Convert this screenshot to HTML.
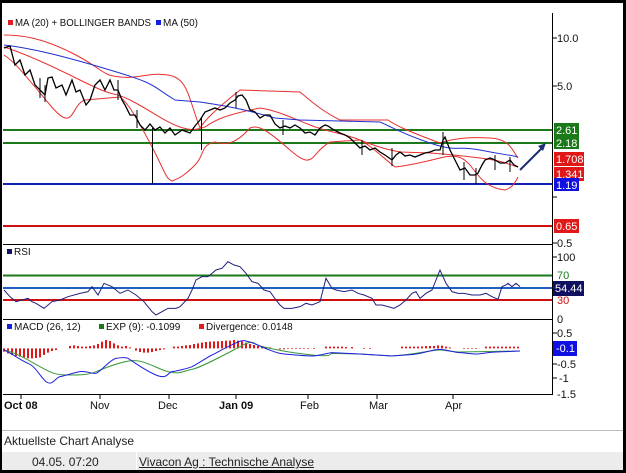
<!DOCTYPE html>
<html><head><meta charset="utf-8"><style>
html,body{margin:0;padding:0;background:#000;}
#w{position:relative;width:626px;height:473px;overflow:hidden;background:#000;}
#in{position:absolute;left:2px;top:3px;width:621px;height:467px;background:#fff;}
svg{position:absolute;left:0;top:0;}
text{font-family:"Liberation Sans",sans-serif;}
.ft{position:absolute;font-family:"Liberation Sans",sans-serif;font-size:12px;color:#222;}
</style></head><body><div id="w"><div id="in"></div>
<svg width="626" height="473" viewBox="0 0 626 473">
<g font-size="11">
<line x1="552.5" y1="13" x2="552.5" y2="395" stroke="#000"/>
<g stroke="#000"><line x1="552" y1="38" x2="557" y2="38"/><line x1="552" y1="86" x2="557" y2="86"/><line x1="552" y1="197" x2="557" y2="197"/><line x1="552" y1="243" x2="557" y2="243"/><line x1="552" y1="257" x2="557" y2="257"/><line x1="552" y1="333" x2="557" y2="333"/><line x1="552" y1="364" x2="557" y2="364"/><line x1="552" y1="378" x2="557" y2="378"/>
<line x1="21" y1="394" x2="21" y2="399"/><line x1="100" y1="394" x2="100" y2="399"/><line x1="169" y1="394" x2="169" y2="399"/><line x1="236" y1="394" x2="236" y2="399"/><line x1="308" y1="394" x2="308" y2="399"/><line x1="377" y1="394" x2="377" y2="399"/><line x1="453" y1="394" x2="453" y2="399"/></g>
<line x1="3" y1="244.5" x2="552" y2="244.5" stroke="#000"/>
<line x1="3" y1="319.5" x2="552" y2="319.5" stroke="#000"/>
<line x1="3" y1="394.5" x2="552" y2="394.5" stroke="#000"/>
<g fill="#111"><text x="557" y="42">10.0</text><text x="557" y="90">5.0</text><text x="557" y="247">0.5</text><text x="557" y="261">100</text><text x="557" y="323">0</text><text x="557" y="337">0.5</text><text x="557" y="368">-0.5</text><text x="559" y="382">-1</text><text x="557" y="398">-1.5</text></g>
<text x="557" y="279" fill="#1a7a1a">70</text><text x="557" y="304" fill="#d01010">30</text>
<rect x="8" y="20" width="5" height="5" fill="#e02020"/><text x="15" y="26" font-size="10" fill="#111" textLength="136" lengthAdjust="spacingAndGlyphs">MA (20) + BOLLINGER BANDS</text>
<rect x="156" y="20" width="5" height="5" fill="#1020e0"/><text x="163" y="26" font-size="10" fill="#111">MA (50)</text>
<rect x="7" y="249" width="5" height="5" fill="#101060"/><text x="14" y="255" font-size="10" fill="#111">RSI</text>
<rect x="7" y="324" width="5" height="5" fill="#1020e0"/><text x="14" y="330" font-size="10" fill="#111">MACD (26, 12)</text>
<rect x="99" y="324" width="5" height="5" fill="#1a7a1a"/><text x="106" y="330" font-size="10" fill="#111">EXP (9): -0.1099</text>
<rect x="199" y="324" width="5" height="5" fill="#e02020"/><text x="206" y="330" font-size="10" fill="#111">Divergence: 0.0148</text>
<g fill="#111" font-size="11"><text x="4" y="409" font-weight="bold">Oct 08</text><text x="90" y="409">Nov</text><text x="158" y="409">Dec</text><text x="219" y="409" font-weight="bold">Jan 09</text><text x="300" y="409">Feb</text><text x="369" y="409">Mar</text><text x="445" y="409">Apr</text></g>
<line x1="3" y1="130" x2="552" y2="130" stroke="#1a7a1a" stroke-width="2"/>
<line x1="3" y1="143" x2="552" y2="143" stroke="#1a7a1a" stroke-width="2"/>
<line x1="3" y1="184" x2="552" y2="184" stroke="#1020b0" stroke-width="2"/>
<line x1="3" y1="226" x2="552" y2="226" stroke="#d01010" stroke-width="2"/>
<g fill="none" stroke-width="1">
<path stroke="#e83030" d="M4,35 C20,35 40,37 72,53 S100,75 120,77 S148,72 168,75 S188,97 200,128 C205,120 215,110 240,90 L300,92 C310,100 320,110 340,120 L388,120 C395,125 405,130 440,143 C455,138 470,137 490,138 S512,150 518,158"/>
<path stroke="#e83030" d="M4,47 C20,52 40,60 80,80 S110,90 130,100 S165,122 180,127 S200,128 205,127 C215,120 225,115 260,108 C275,110 290,117 310,125 S340,132 360,140 S390,150 400,152 L430,153 C445,154 455,155 480,158 S510,165 518,167"/>
<path stroke="#e83030" d="M4,55 C15,62 25,75 50,105 S70,105 85,100 L120,97 C128,103 135,115 150,143 S165,178 172,181 C180,178 185,175 195,165 S200,145 215,142 C225,145 235,145 250,128 C258,125 265,128 290,150 S310,153 330,142 L360,140 C370,145 380,155 395,167 C405,166 420,163 440,158 S465,160 470,165 C478,175 485,188 505,190 C512,188 515,183 518,177"/>
<path stroke="#2030d0" d="M4,45 C30,48 60,55 110,70 S150,85 175,100 L200,102 C220,105 240,108 275,118 L300,120 L380,122 C390,126 400,133 430,143 S455,145 480,150 S510,155 518,157"/>
<path stroke="#000" stroke-width="1.3" d="M4,48 L10,46 L15,65 L20,60 L25,75 L30,70 L35,85 L40,90 L45,95 L48,78 L52,77 L56,88 L62,85 L66,95 L72,80 L76,92 L80,90 L86,105 L90,100 L95,85 L100,80 L105,90 L110,80 L114,90 L118,90 L122,100 L125,105 L130,115 L135,115 L140,125 L145,130 L150,124 L155,130 L160,127 L165,133 L170,128 L175,135 L182,130 L190,133 L195,126 L200,120 L205,112 L210,110 L215,108 L220,110 L225,108 L230,103 L235,100 L238,96 L242,95 L246,100 L250,110 L255,112 L260,118 L265,115 L270,115 L275,124 L280,128 L285,126 L290,128 L295,125 L300,128 L305,133 L310,132 L315,135 L320,128 L325,125 L328,126 L334,130 L340,133 L345,135 L350,138 L355,143 L360,148 L365,146 L370,150 L375,148 L380,152 L385,155 L392,160 L396,155 L400,152 L405,156 L410,155 L415,157 L420,155 L425,153 L430,152 L435,150 L440,150 L443,140 L445,137 L450,150 L455,160 L460,170 L465,168 L470,175 L475,175 L478,173 L482,165 L485,160 L490,158 L495,160 L500,163 L505,163 L510,160 L514,165 L518,167"/>
<g stroke="#000"><line x1="152.5" y1="128" x2="152.5" y2="184"/><line x1="201.5" y1="118" x2="201.5" y2="150"/><line x1="40" y1="78" x2="40" y2="98"/><line x1="45" y1="85" x2="45" y2="102"/><line x1="118" y1="80" x2="118" y2="100"/><line x1="137" y1="110" x2="137" y2="128"/><line x1="236" y1="92" x2="236" y2="108"/><line x1="283" y1="120" x2="283" y2="135"/><line x1="362" y1="140" x2="362" y2="155"/><line x1="392" y1="148" x2="392" y2="166"/><line x1="443" y1="132" x2="443" y2="155"/><line x1="464" y1="162" x2="464" y2="180"/><line x1="476" y1="168" x2="476" y2="184"/><line x1="495" y1="155" x2="495" y2="170"/><line x1="510" y1="157" x2="510" y2="172"/></g>
</g>
<path d="M520,170 L544,146" stroke="#203070" stroke-width="2" fill="none"/><path d="M546,143 L538,146 L543,151 Z" fill="#203070"/>
<rect x="554" y="123" width="25" height="26" fill="#1a7a1a"/><text x="556" y="134" fill="#fff">2.61</text><text x="556" y="147" fill="#fff">2.18</text>
<rect x="554" y="152" width="30" height="14" fill="#e01818"/><text x="556" y="163" fill="#fff">1.708</text>
<rect x="554" y="167" width="30" height="14" fill="#e01818"/><text x="556" y="178" fill="#fff">1.341</text>
<rect x="554" y="178" width="25" height="13" fill="#1010e0"/><text x="556" y="189" fill="#fff">1.19</text>
<rect x="554" y="219" width="25" height="14" fill="#e01818"/><text x="556" y="230" fill="#fff">0.65</text>
<line x1="3" y1="275.5" x2="552" y2="275.5" stroke="#1a7a1a" stroke-width="2"/>
<line x1="3" y1="288" x2="552" y2="288" stroke="#2060c0" stroke-width="2"/>
<line x1="3" y1="300" x2="552" y2="300" stroke="#d01010" stroke-width="2"/>
<g transform="translate(0,240) scale(0.4,0.33333)" fill="none">
<path vector-effect="non-scaling-stroke" stroke="#202080" stroke-width="1" d="M10,150 L25,170 L40,185 L55,180 L70,175 L80,185 L90,190 L110,205 L130,185 L150,180 L170,170 L200,160 L220,155 L230,140 L245,165 L260,130 L280,140 L300,160 L320,150 L340,165 L360,185 L370,200 L380,215 L390,225 L405,215 L420,205 L440,205 L450,200 L470,175 L480,150 L490,120 L505,110 L520,110 L530,100 L540,90 L555,85 L570,65 L585,75 L600,80 L615,100 L630,125 L645,130 L660,150 L675,155 L690,180 L700,195 L710,205 L730,205 L750,200 L765,190 L780,195 L800,185 L815,115 L830,145 L840,150 L860,155 L880,150 L895,160 L910,165 L930,175 L940,195 L955,195 L970,200 L985,205 L1000,195 L1015,180 L1030,160 L1040,155 L1050,175 L1065,160 L1080,150 L1090,120 L1100,90 L1115,130 L1130,155 L1145,160 L1160,160 L1180,165 L1200,165 L1215,160 L1230,170 L1245,178 L1255,140 L1265,135 L1270,130 L1280,140 L1290,130 L1300,140"/>
<path vector-effect="non-scaling-stroke" stroke="#e01818" stroke-width="2" d="M10,325V335M20,325V340M30,325V345M40,325V348M50,325V350M60,325V352M70,325V355M80,325V355M90,325V354M100,325V352M110,325V345M120,325V338M130,325V333M140,325V330M175,325V318M185,325V316M195,325V318M205,325V320M215,325V320M225,325V318M235,325V316M245,325V312M255,325V305M265,325V300M275,325V303M285,325V310M295,325V316M305,325V320M315,325V318M325,325V322M340,325V332M350,325V336M360,325V338M370,325V338M380,325V336M390,325V333M400,325V330M410,325V328M435,325V320M445,325V320M455,325V318M465,325V316M475,325V315M485,325V312M495,325V310M505,325V308M515,325V306M525,325V305M535,325V304M545,325V304M555,325V303M565,325V302M575,325V302M585,325V300M595,325V302M605,325V304M615,325V308M625,325V312M635,325V315M645,325V318M655,325V320M665,325V321M675,325V322M700,325V328M710,325V328M720,325V327M730,325V327M740,325V327M750,325V327M760,325V327M770,325V327M785,325V327M815,325V320M825,325V320M835,325V320M845,325V320M855,325V320M865,325V321M880,325V321M910,325V327M925,325V327M1005,325V320M1015,325V320M1025,325V320M1035,325V320M1045,325V320M1055,325V319M1065,325V318M1075,325V318M1085,325V318M1095,325V316M1105,325V317M1115,325V320M1125,325V322M1160,325V327M1170,325V327M1180,325V327M1190,325V327M1215,325V320M1225,325V320M1235,325V320M1245,325V320M1255,325V320M1265,325V320M1275,325V320M1285,325V320M1295,325V320"/>
<path vector-effect="non-scaling-stroke" stroke="#3a9a3a" stroke-width="1" d="M10,330 C40,338 70,360 100,380 S140,405 170,405 S220,405 240,395 S300,365 330,362 S390,385 420,395 S460,392 480,388 S560,345 600,320 S630,312 650,318 S720,338 780,345 S820,340 830,340 L900,342 L980,348 C1010,345 1030,342 1050,338 S1090,330 1100,330 S1130,336 1150,336 L1300,333"/>
<path vector-effect="non-scaling-stroke" stroke="#2020e0" stroke-width="1" d="M10,330 C30,340 50,360 70,370 S100,410 115,425 S140,412 150,410 S185,398 200,395 S230,402 240,400 S275,358 290,355 S315,352 320,355 S360,390 390,405 S420,396 430,395 S470,385 480,380 S520,350 530,345 S560,325 570,320 S600,300 610,302 S640,312 650,318 S690,338 700,340 S760,348 780,348 S820,338 830,338 L900,342 L980,348 C1010,345 1030,345 1050,340 S1085,328 1100,328 S1130,336 1150,338 S1180,342 1190,342 S1220,337 1240,336 L1300,333"/>
</g>
<rect x="553" y="281" width="31" height="15" fill="#101060"/><text x="555" y="292" fill="#fff">54.44</text>
<rect x="553" y="341" width="24" height="15" fill="#1010e0"/><text x="556" y="352" fill="#fff">-0.1</text>
<line x1="2" y1="430.5" x2="623" y2="430.5" stroke="#bbb"/>
<rect x="2" y="452" width="621" height="18" fill="#ececec"/>
<line x1="136.5" y1="452" x2="136.5" y2="470" stroke="#fff"/>
</g></svg>
<div class="ft" style="left:4px;top:434px;">Aktuellste Chart Analyse</div>
<div class="ft" style="left:32px;top:455px;">04.05. 07:20</div>
<div class="ft" style="left:139px;top:455px;text-decoration:underline;">Vivacon Ag : Technische Analyse</div>
</div></body></html>
